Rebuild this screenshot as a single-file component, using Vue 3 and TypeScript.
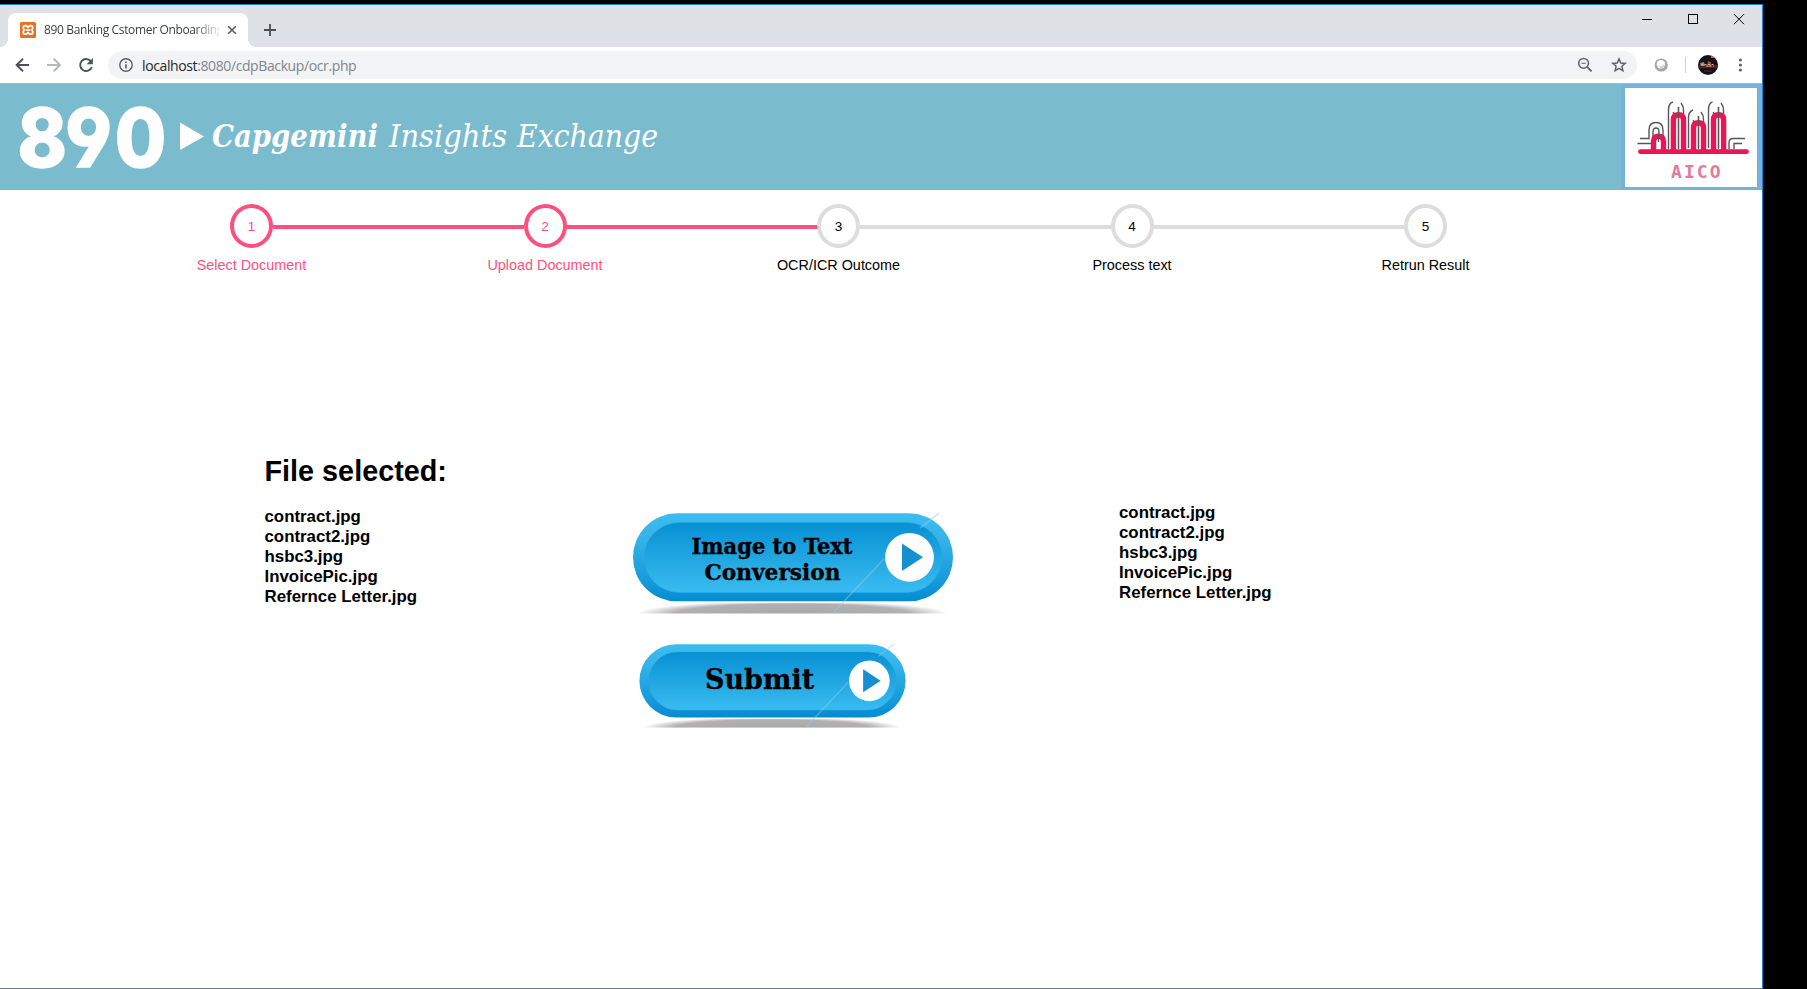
<script setup lang="ts">
interface Step {
  label: string
  done: boolean
}

interface PillButton {
  id: string
  lines: { text: string; x: number; y: number; width: number; size: number }[]
}

const steps: Step[] = [
  { label: 'Select Document', done: true },
  { label: 'Upload Document', done: true },
  { label: 'OCR/ICR Outcome', done: false },
  { label: 'Process text', done: false },
  { label: 'Retrun Result', done: false },
]

const files: string[] = ['contract.jpg', 'contract2.jpg', 'hsbc3.jpg', 'InvoicePic.jpg', 'Refernce Letter.jpg']

const buttons: PillButton[] = [
  {
    id: 'convert',
    lines: [
      { text: 'Image to Text', x: 58.5, y: 41, width: 161, size: 22.5 },
      { text: 'Conversion', x: 71.5, y: 66.7, width: 136, size: 22.5 },
    ],
  },
  {
    id: 'submit',
    lines: [{ text: 'Submit', x: 79, y: 54, width: 131, size: 34 }],
  },
]
</script>

<template>
  <div class="desktop">
    <div class="window">
      <div class="titlebar">
        <div class="tab">
          <svg class="favicon" width="16" height="16" viewBox="0 0 16 16">
            <rect width="16" height="16" rx="1.5" fill="#e8701f" />
            <path d="M5.2 3.7 H6.3 L8 5.4 L9.7 3.7 H10.8 Q12.7 3.7 12.7 5.8 Q12.7 7.1 11.6 7.9 Q12.8 8.7 12.8 10 Q12.8 12.2 10.8 12.2 H9.6 L8 10.5 L6.4 12.2 H5.2 Q3.2 12.2 3.2 10 Q3.2 8.7 4.4 7.9 Q3.3 7.1 3.3 5.8 Q3.3 3.7 5.2 3.7 Z" fill="none" stroke="#fff" stroke-width="1.8" />
            <path d="M6 8 H10" stroke="#fff" stroke-width="1.6" />
          </svg>
          <span class="tab-title">890 Banking Cstomer Onboarding</span>
          <svg class="tab-close" width="10" height="10" viewBox="0 0 10 10">
            <path d="M1.2 1.2 L8.8 8.8 M8.8 1.2 L1.2 8.8" stroke="#55585c" stroke-width="1.5" />
          </svg>
        </div>
        <svg class="new-tab" width="12" height="12" viewBox="0 0 12 12">
          <path d="M6 0 V12 M0 6 H12" stroke="#4a4d51" stroke-width="1.8" />
        </svg>
        <svg class="controls" width="104" height="12" viewBox="0 0 104 12" fill="none" stroke="#000" stroke-width="1">
          <path d="M0 5.5 H10" />
          <rect x="46.5" y=".5" width="9" height="9" />
          <path d="M92 .2 L102 10.2 M102 .2 L92 10.2" />
        </svg>
      </div>

      <div class="toolbar">
        <svg class="nav" width="82" height="20" viewBox="0 0 82 20" fill="none" stroke-width="1.9">
          <path d="M14 10 H1.5 M8 3.8 L1.6 10 L8 16.2" stroke="#4e5155" />
          <path d="M32 10 H45 M38.7 3.8 L45 10 L38.7 16.2" stroke="#b5b7b9" />
          <path d="M75.8 6.2 A6 6 0 1 0 76.8 12.1" stroke="#4e5155" />
          <path d="M77.9 3 V9.2 H71.6 Z" fill="#4e5155" />
        </svg>
        <div class="omnibox">
          <svg width="14" height="14" viewBox="0 0 14 14" fill="none" stroke="#5a5d61">
            <circle cx="7" cy="7" r="6.2" stroke-width="1.4" />
            <path d="M7 6.2 V10.4 M7 3.5 V5" stroke-width="1.6" />
          </svg>
          <span class="url">localhost<span>:8080/cdpBackup/ocr.php</span></span>
          <svg class="box-icons" width="50" height="16" viewBox="0 0 50 16" fill="none" stroke="#5f6368">
            <circle cx="5.6" cy="6.3" r="4.9" stroke-width="1.5" />
            <path d="M9.1 9.8 L13.6 14.3" stroke-width="1.9" />
            <path d="M3.4 6.3 H7.8" stroke-width="1" />
            <path d="M41 1.9 L42.8 6 L47.2 6.4 L43.9 9.3 L44.9 13.7 L41 11.4 L37.1 13.7 L38.1 9.3 L34.8 6.4 L39.2 6 Z" stroke-width="1.5" />
          </svg>
        </div>
        <svg class="extensions" width="96" height="22" viewBox="0 0 96 22">
          <circle cx="7.2" cy="11" r="6.6" fill="#a6a6a6" />
          <circle cx="6.9" cy="10.3" r="4.2" fill="#fff" />
          <path d="M4 11 Q7 14 10.6 9.5 Q10 14.8 6.5 14.3" fill="#d2d2d2" />
          <path d="M31.5 3 V19" stroke="#cfd1d4" />
          <clipPath id="avatar-clip"><circle cx="54" cy="11" r="10" /></clipPath>
          <g clip-path="url(#avatar-clip)">
            <rect x="44" y="1" width="20" height="20" fill="#17111b" />
            <path d="M44 11 H64 V14 H44 Z" fill="#4c2720" />
            <path d="M46 9 L50 8 L51 12 L47 12 Z" fill="#8c8d9b" />
            <path d="M54 7 L57 8 V13 H53 Z" fill="#a64b34" />
            <path d="M57 2 H60 V4 H57 Z" fill="#b96a3e" />
            <path d="M47 10.5 H61 M52 12 H60" stroke="#dcad90" stroke-width="1" stroke-dasharray="2 1.5" />
            <path d="M50 17 H58" stroke="#593019" />
          </g>
          <g fill="#5f6368">
            <circle cx="86.4" cy="6" r="1.6" /><circle cx="86.4" cy="11" r="1.6" /><circle cx="86.4" cy="16" r="1.6" />
          </g>
        </svg>
      </div>

      <header class="banner">
        <svg class="brand" width="1621" height="105" viewBox="0 0 1621 105" fill="#fff">
          <text class="brand-number" transform="scale(.92 1)" x="19 70.8 124.8" y="83">890</text>
          <path d="M180 38.5 L204 52.5 L180 66 Z" />
          <text class="brand-bold" x="212" y="63" textLength="166" lengthAdjust="spacingAndGlyphs">Capgemini</text>
          <text class="brand-light" x="389" y="63" textLength="118" lengthAdjust="spacingAndGlyphs">Insights</text>
          <text class="brand-light" x="517" y="63" textLength="141" lengthAdjust="spacingAndGlyphs">Exchange</text>
        </svg>
        <svg class="aico" width="132" height="99" viewBox="0 0 132 99" fill="none">
          <g stroke="#55565a" stroke-width="1.4">
            <path d="M15 50.5 H24 V42 Q24 34.5 31 34.5 Q38 34.5 38 42 V48 M28 50 V44 Q28 40 31 40 Q34 40 34 44 V48 M12.5 55.5 H26" />
            <path d="M43.5 61 V22 Q43.5 15 48 14 M56 15 Q58.5 18 58.5 22 M53.5 19 V61 M58.5 22 V32 M48.5 24 V30" />
            <path d="M63.5 60 V29 Q63.5 24 68 22 M76 24 Q78.5 27 78.5 31 V36 M68.5 32 V38 M73.5 28 V60" />
            <path d="M83.5 60 V22 Q83.5 15 87.5 14 M96 15 Q98.5 18 98.5 22 V30 M88.5 24 V30 M93.5 19 V60" />
            <path d="M104 61 V55 Q104 50.5 108 50.5 H120 M109 61 V55.5 H117" />
          </g>
          <g stroke="#e91657" stroke-width="5.4" stroke-linecap="round">
            <path d="M15.5 63.7 H121.5" stroke-width="4.8" />
            <path d="M28.5 62 V54 Q28.5 48.2 33.5 48.2 Q38.5 48.2 38.5 54 V62" />
            <path d="M48.4 62 V32 Q48.4 26.7 53.4 26.7 Q58.5 26.7 58.5 32 V62" />
            <path d="M68.5 62 V40 Q68.5 34.7 73.5 34.7 Q78.5 34.7 78.5 40 V62" />
            <path d="M88.5 62 V32 Q88.5 26.7 93.5 26.7 Q98.6 26.7 98.6 32 V62" />
          </g>
          <path d="M33.5 46 V54 M53.5 19 V61 M73.5 28 V61 M93.5 19 V61" stroke="#55565a" stroke-width="1.2" />
          <text x="46" y="89.5" textLength="49.5" lengthAdjust="spacing" class="aico-name">AICO</text>
        </svg>
      </header>

      <ol class="steps">
        <li v-for="(step, i) in steps" :key="step.label" :class="{ done: step.done }">
          <span class="num">{{ i + 1 }}</span>
          <span class="label">{{ step.label }}</span>
        </li>
      </ol>

      <main class="content">
        <section class="selected">
          <h1>File selected:</h1>
          <ul class="files">
            <li v-for="file in files" :key="file">{{ file }}</li>
          </ul>
        </section>

        <section class="actions">
          <svg v-for="button in buttons" :key="button.id" :class="['pill', button.id]" viewBox="0 0 320 101">
            <defs>
              <linearGradient :id="button.id + '-rim'" x1="0" y1="0" x2="0" y2="1">
                <stop offset="0" stop-color="#3cbcf1" />
                <stop offset=".25" stop-color="#37b5eb" />
                <stop offset=".8" stop-color="#1498da" />
                <stop offset="1" stop-color="#048bd0" />
              </linearGradient>
              <linearGradient :id="button.id + '-face'" x1="0" y1="0" x2="0" y2="1">
                <stop offset="0" stop-color="#0790d3" />
                <stop offset="1" stop-color="#3abcf0" />
              </linearGradient>
              <radialGradient :id="button.id + '-shade'" cx=".5" cy="1" r=".5" gradientTransform="matrix(1 0 0 2.4 0 -1.4)">
                <stop offset="0" stop-color="#a8a8a8" />
                <stop offset=".75" stop-color="#b2b0b0" />
                <stop offset="1" stop-color="#fff" />
              </radialGradient>
            </defs>
            <rect x="4" y="90" width="311" height="10.5" :fill="`url(#${button.id}-shade)`" />
            <rect x="0" y=".3" width="320" height="88" rx="44" :fill="`url(#${button.id}-rim)`" />
            <rect x="11" y="9.5" width="298" height="70" rx="35" :fill="`url(#${button.id}-face)`" stroke="#29a9e3" stroke-opacity=".5" />
            <path d="M200 100 L251 46 M287 15 L306 0" stroke="#8fcdec" stroke-opacity=".45" stroke-width="1.6" />
            <circle cx="276.5" cy="44.3" r="24.4" fill="#fff" />
            <path d="M269 30.5 L290 44.3 L269 58 Z" fill="#168fd0" />
            <text
              v-for="line in button.lines"
              :key="line.text"
              :x="line.x"
              :y="line.y"
              :font-size="line.size"
              :textLength="line.width"
              lengthAdjust="spacingAndGlyphs"
            >{{ line.text }}</text>
          </svg>
        </section>

        <section class="output">
          <ul class="files">
            <li v-for="file in files" :key="file">{{ file }}</li>
          </ul>
        </section>
      </main>
    </div>
  </div>
</template>

<style>
body {
  margin: 0;
  overflow: hidden;
}
</style>

<style scoped>
.desktop {
  width: 1807px;
  height: 989px;
  padding-top: 4px;
  box-sizing: border-box;
  background: #000;
  font-family: "Liberation Sans", Arial, sans-serif;
}
.window {
  width: 1763px;
  height: 985px;
  box-sizing: border-box;
  border-top: 1px solid #1883d7;
  border-right: 1px solid #1883d7;
  border-bottom: 1px solid #6d7c8c;
  background: #fff;
}
svg {
  display: block;
  flex: none;
}
.titlebar {
  height: 42px;
  display: flex;
  align-items: flex-start;
  background: #dee1e6;
}
.tab {
  position: relative;
  width: 240px;
  height: 34px;
  margin: 8px 0 0 8px;
  padding-left: 12px;
  box-sizing: border-box;
  display: flex;
  align-items: center;
  border-radius: 8px 8px 0 0;
  background: #fff;
}
.tab::before,
.tab::after {
  content: "";
  position: absolute;
  bottom: 0;
  width: 8px;
  height: 8px;
}
.tab::before {
  left: -8px;
  background: radial-gradient(circle at 0 0, #dee1e6 7.6px, #fff 8.2px);
}
.tab::after {
  right: -8px;
  background: radial-gradient(circle at 100% 0, #dee1e6 7.6px, #fff 8.2px);
}
.tab-title {
  width: 175px;
  margin-left: 8px;
  overflow: hidden;
  white-space: nowrap;
  font: 12px/18px "Open Sans", "Noto Sans", sans-serif;
  letter-spacing: -0.35px;
  color: #3c4043;
  -webkit-mask-image: linear-gradient(90deg, #000 150px, transparent 178px);
  mask-image: linear-gradient(90deg, #000 150px, transparent 178px);
}
.tab-close {
  margin-left: 8px;
}
.new-tab {
  margin: 19px 0 0 16px;
}
.controls {
  margin: 9px 16px 0 auto;
}
.toolbar {
  height: 36px;
  display: flex;
  align-items: center;
  border-bottom: 1px solid #b6b4b5;
  box-sizing: content-box;
}
.nav {
  margin-left: 15px;
}
.omnibox {
  width: 1529px;
  height: 28px;
  margin-left: 11px;
  padding: 0 9px 0 11px;
  box-sizing: border-box;
  display: flex;
  align-items: center;
  border-radius: 14px;
  background: #f1f3f4;
}
.url {
  margin-left: 9px;
  padding-top: 1px;
  font: 14px/20px "Open Sans", "Noto Sans", sans-serif;
  letter-spacing: -0.39px;
  color: #25282c;
  white-space: nowrap;
}
.url span {
  color: #80868b;
}
.box-icons {
  margin-left: auto;
}
.extensions {
  margin-left: 17px;
}
.banner {
  height: 106px;
  display: flex;
  align-items: flex-start;
  background: #77b2dc;
}
.brand {
  background: #7abbce;
}
.brand-number {
  font: 800 81px Inter, "Open Sans", sans-serif;
  font-feature-settings: "cv04", "ss01";
  stroke: #fff;
  stroke-width: 1.4px;
}
.brand-bold {
  font: italic 700 32px "DejaVu Serif", serif;
}
.brand-light {
  font: italic 400 32px "DejaVu Serif", serif;
}
.aico {
  margin: 4px 0 0 4px;
  background: #fff;
}
.aico-name {
  font: 700 18px "DejaVu Sans Mono", monospace;
  fill: #e5799c;
}
.steps {
  width: 1467.5px;
  margin: 14px 0 0 104.75px;
  padding: 0;
  display: grid;
  grid-template-columns: repeat(5, 1fr);
  list-style: none;
  font-size: 14.4px;
  line-height: 18px;
  color: #000;
}
.steps li {
  position: relative;
  display: flex;
  flex-direction: column;
  align-items: center;
}
.steps li:not(:last-child)::after {
  content: "";
  position: absolute;
  top: 21px;
  left: calc(50% + 21px);
  width: calc(100% - 42px);
  height: 4px;
  background: #ddd;
}
.steps li.done {
  color: #ff4f7e;
}
.steps li.done::after {
  background: #ff4f7e;
}
.num {
  width: 43px;
  height: 44px;
  padding-top: 1px;
  box-sizing: border-box;
  border: 4px solid #ddd;
  border-radius: 50%;
  display: flex;
  align-items: center;
  justify-content: center;
  font-size: 13.5px;
}
.done .num {
  border-color: #ff4f7e;
}
.label {
  margin-top: 8px;
}
.content {
  display: flex;
  align-items: flex-start;
  margin: 180px 0 0 264.5px;
}
.selected {
  width: 368.5px;
}
h1 {
  margin: 0 0 19px;
  font-size: 28.8px;
  line-height: 34px;
}
.files {
  margin: 0;
  padding: 0;
  list-style: none;
  font-size: 16.85px;
  font-weight: 700;
  line-height: 20px;
}
.actions {
  width: 486px;
  padding-top: 59px;
}
.pill text {
  font-family: Rockwell, "Rockwell Nova", "DejaVu Serif", serif;
  font-weight: 700;
  fill: #000;
  stroke: #000;
  stroke-width: 0.4px;
}
.convert {
  width: 320px;
  height: 101px;
}
.submit {
  width: 267px;
  height: 84px;
  margin: 30px 0 0 6px;
}
.output {
  padding-top: 49px;
}
</style>
